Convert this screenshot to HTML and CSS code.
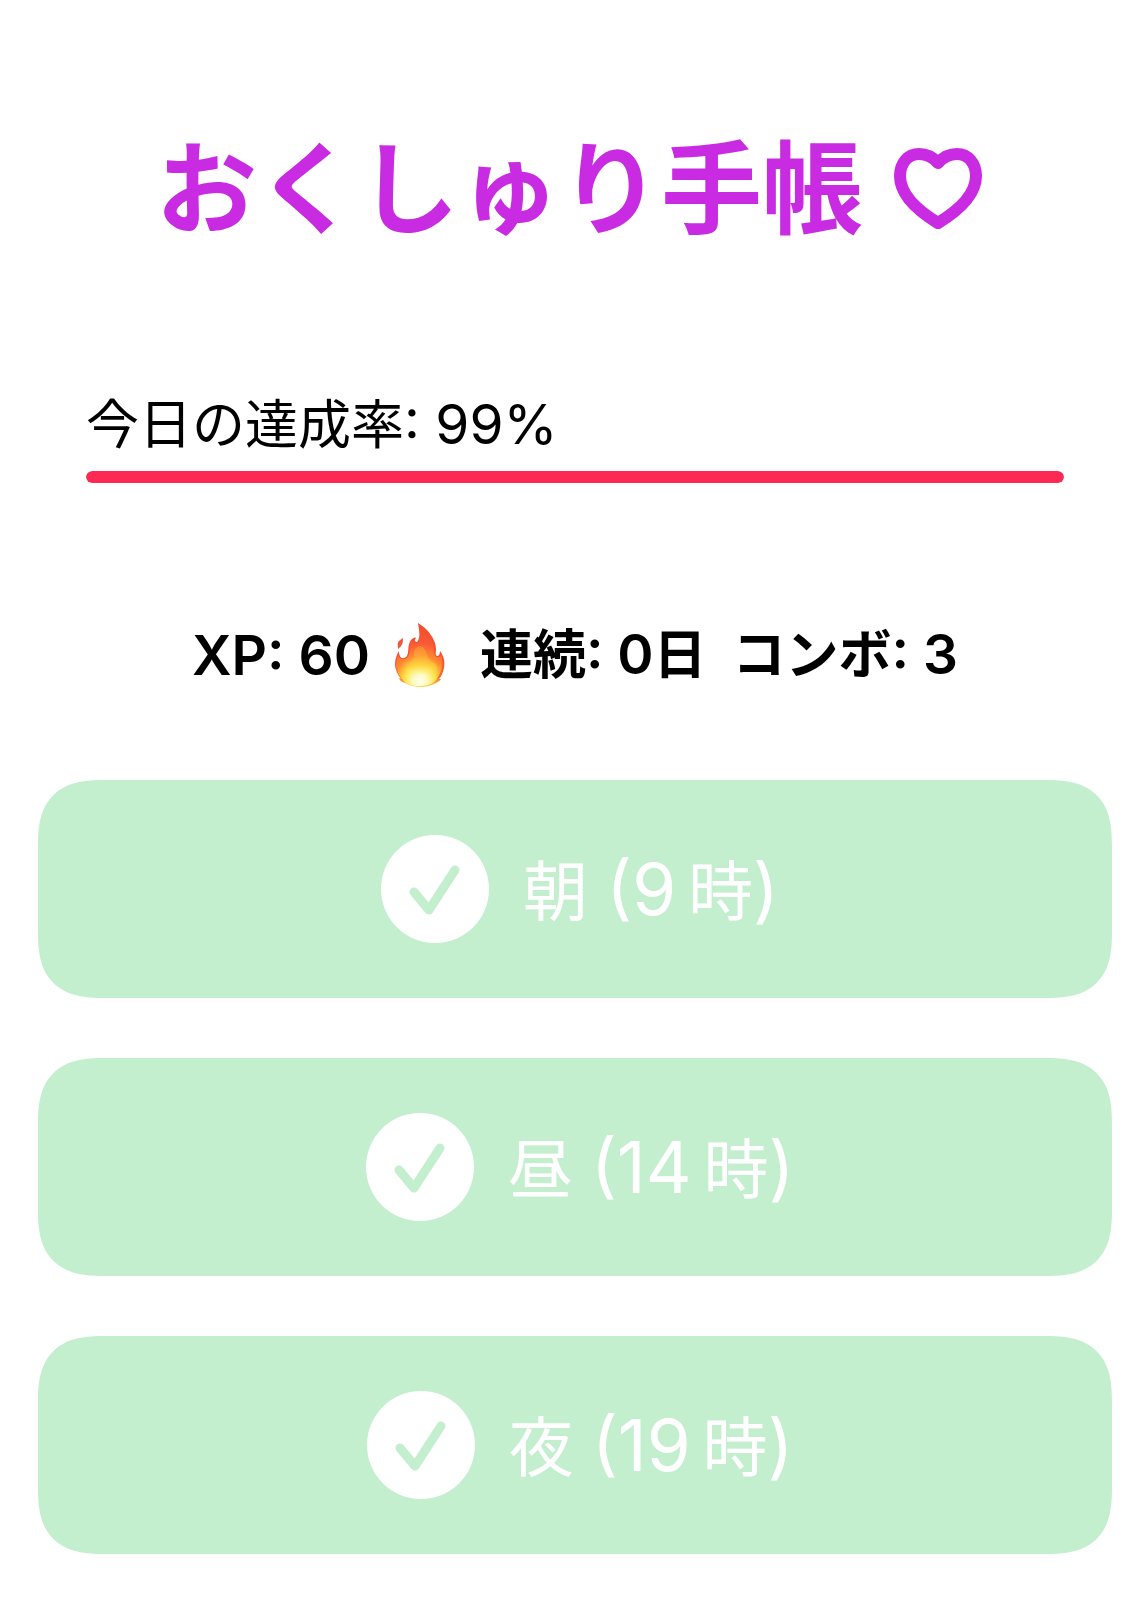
FILE: index.html
```html
<!DOCTYPE html>
<html lang="ja">
<head>
    <meta charset="UTF-8">
    <meta name="viewport" content="width=device-width, initial-scale=1.0">
    <title>おくしゅり手帳</title>
    <link rel="stylesheet" href="styles.css">
</head>
<body>

    <header>
        <h1>おくしゅり手帳
            <svg class="heart" viewBox="0 0 88 82" aria-hidden="true">
                <path d="M44 15C38 8 31 6 25 6C14 6 6 15 6 28C6 45 21 61 44 75C67 61 82 45 82 28C82 15 74 6 63 6C57 6 50 8 44 15Z"/>
            </svg>
        </h1>
    </header>

    <section class="progress">
        <label for="rate">今日の達成率<span class="num">: 99%</span></label>
        <progress id="rate" value="100" max="100"></progress>
    </section>

    <div class="stats">
        <span class="num">XP: 60</span>
        <svg class="fire" viewBox="0 0 52 66" role="img" aria-label="炎">
            <defs>
                <linearGradient id="edge" x1="0" y1="0" x2="0" y2="1">
                    <stop offset="0.6" stop-color="#f2502f"/>
                    <stop offset="0.85" stop-color="#fa7030"/>
                    <stop offset="1" stop-color="#ffd84a"/>
                </linearGradient>
                <radialGradient id="flame" gradientUnits="userSpaceOnUse" cx="26" cy="59" r="58">
                    <stop offset="0" stop-color="#fffef0"/>
                    <stop offset="0.12" stop-color="#fffbc0"/>
                    <stop offset="0.28" stop-color="#ffe040"/>
                    <stop offset="0.44" stop-color="#ff8a30"/>
                    <stop offset="0.65" stop-color="#fb5a35"/>
                    <stop offset="1" stop-color="#f04a2b"/>
                </radialGradient>
                <linearGradient id="core" x1="0" y1="0" x2="0" y2="1">
                    <stop offset="0" stop-color="#ff9636"/>
                    <stop offset="0.5" stop-color="#ffc93a"/>
                    <stop offset="0.8" stop-color="#fff27a" stop-opacity="0"/>
                </linearGradient>
            </defs>
            <path fill="url(#edge)" d="M24 1C33 6 42 17 42 27C42 30 41 33 43 34C45 34 46 32 46 29C50 34 51 40 50 46C49 51 47 55 45 57L47 57C45 60 42 61 40 62C32 66 20 66 11 61C8 60 6 59 5 56L7 57C3 52 1 47 1 42C1 37 3 32 5 29C5 34 7 37 10 36C17 34 12 25 17 18C19 16 21 15 22 16C20 18 21 20 23 20C27 16 25 8 24 1Z"/>
            <path fill="url(#flame)" d="M25 4C32 9 40 18 40 28C40 33 42 36 44 35C46 35 47 33 47 32C49 38 49 44 47 49C45 54 42 60 37 62C29 65 18 65 12 61C6 56 2 49 2 43C2 39 3 36 4 33C6 37 8 38 11 37C18 34 14 24 18 18C19 21 22 22 24 20C27 17 27 10 25 4Z"/>
            <path fill="url(#core)" opacity="0.6" d="M26 24C32 25 32 32 35 37C38 42 42 40 43 45C43 52 37 59 27 61C16 61 11 55 12 48C13 42 20 41 20 34C20 29 21 25 26 24Z"/>
            <path fill="#ef563d" d="M9 16C9 20 9 23 4 27C4 24 3 21 5 19Z"/>
        </svg>
        <span>連続<span class="num">: 0</span>日</span>
        <span class="combo">コンボ<span class="num">: 3</span></span>
    </div>

    <main class="doses">
        <button type="button" class="dose" disabled>
            <svg class="check" viewBox="0 0 108 108" aria-hidden="true">
                <circle cx="54" cy="54" r="54"/>
                <path d="M33 57L48 75L74 35"/>
            </svg>
            <span class="label">朝 <span class="time">(9</span>&#8201;時<span class="time">)</span></span>
        </button>
        <button type="button" class="dose" disabled>
            <svg class="check" viewBox="0 0 108 108" aria-hidden="true">
                <circle cx="54" cy="54" r="54"/>
                <path d="M33 57L48 75L74 35"/>
            </svg>
            <span class="label">昼 <span class="time">(14</span>&#8201;時<span class="time">)</span></span>
        </button>
        <button type="button" class="dose" disabled>
            <svg class="check" viewBox="0 0 108 108" aria-hidden="true">
                <circle cx="54" cy="54" r="54"/>
                <path d="M33 57L48 75L74 35"/>
            </svg>
            <span class="label">夜 <span class="time">(19</span>&#8201;時<span class="time">)</span></span>
        </button>
    </main>

</body>
</html>
```
FILE: styles.css
```css
body {
    font-family: Inter, "Noto Sans CJK JP", sans-serif;
    background-color: #fff;
    color: #000;
    margin: 0;
    padding: 121px 34px 64px 38px;
}
h1 {
    display: flex;
    justify-content: center;
    align-items: center;
    gap: 31px;
    margin: 0;
    padding-right: 12px;
    color: #c92be2;
    font-size: 101px;
    font-weight: 700;
    line-height: 136px;
}
.heart {
    width: 88px;
    height: 82px;
    fill: none;
    stroke: #c92be2;
    stroke-width: 12;
    stroke-linejoin: round;
}
.progress {
    margin: 128px 48px 0;
    font-size: 53px;
    line-height: 80px;
}
.num {
    font-size: 55px;
    line-height: 1;
}
.progress label {
    display: block;
}
.progress progress {
    display: block;
    width: 100%;
    height: 12px;
    margin-top: 6px;
    border: none;
    border-radius: 6px;
    overflow: hidden;
    appearance: none;
    background: #e9e9eb;
}
progress::-webkit-progress-bar {
    background: #e9e9eb;
}
progress::-webkit-progress-value {
    background: #fd2854;
    border-radius: 6px;
}
.stats {
    display: flex;
    justify-content: center;
    align-items: center;
    margin-top: 132px;
    font-size: 53px;
    font-weight: 600;
    line-height: 80px;
}
.combo {
    margin-left: 26px;
}
.fire {
    width: 52px;
    height: 66px;
    margin: 0 34px 0 24px;
}
.doses {
    display: flex;
    flex-direction: column;
    gap: 60px;
    margin-top: 85px;
}
.dose {
    display: flex;
    justify-content: center;
    align-items: center;
    gap: 34px;
    width: 100%;
    padding: 55px 0 55px 10px;
    border: none;
    border-radius: 50px;
    background-color: #c4efcf;
    color: #fff;
    font-family: inherit;
    font-size: 65px;
}
/* smoother corners where the browser has them */
@supports (corner-shape: squircle) {
    .dose {
        border-radius: 66px;
        corner-shape: superellipse(1.4);
    }
}
.label {
    padding-top: 6px;
    line-height: 102px;
}
.time {
    font-size: 71px;
    line-height: 1;
}
.check {
    width: 108px;
    height: 108px;
    fill: #fff;
}
.check path {
    fill: none;
    stroke: #c4efcf;
    stroke-width: 9;
    stroke-linecap: round;
    stroke-linejoin: round;
}
```
